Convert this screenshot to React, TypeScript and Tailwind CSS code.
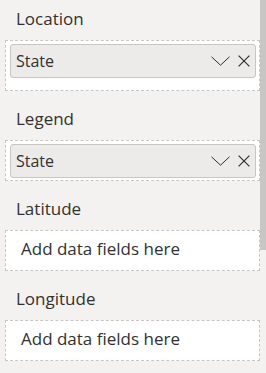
const font = { fontFamily: '"Open Sans", "Noto Sans", sans-serif' };

const Chevron = () => (
  <svg width="19" height="10" viewBox="0 0 19 10" fill="none" stroke="#323130" strokeWidth="1">
    <path d="M0.5 0.8 L9.5 9.2 L18.5 0.8" />
  </svg>
);

const Close = () => (
  <svg width="12" height="12" viewBox="0 0 12 12" fill="none" stroke="#323130" strokeWidth="1.2">
    <path d="M0.6 0.6 L11.4 11.4 M11.4 0.6 L0.6 11.4" />
  </svg>
);

const FieldChip = ({ name }: { name: string }) => (
  <div className="flex h-[34px] items-center rounded-[3px] border border-[#c8c6c4] bg-[#edebe9] pl-[5px] pr-[5px]">
    <span className="flex-1 text-[16px] leading-[24px] text-[#323130]">{name}</span>
    <Chevron />
    <span className="ml-[8px]">
      <Close />
    </span>
  </div>
);

const Well = ({ label, fields, extra }: { label: string; fields?: string[]; extra?: boolean }) => (
  <div className="flex flex-col">
    <div className="pl-[11px] text-[17px] leading-[24px] text-[#323130]">{label}</div>
    {fields ? (
      <div
        className={`mt-[9px] border border-dashed border-[#c8c6c4] bg-white pl-[4px] pr-[3px] pt-[3px] ${
          extra ? "h-[51px]" : "h-[41px]"
        }`}
      >
        {fields.map((f) => (
          <FieldChip key={f} name={f} />
        ))}
      </div>
    ) : (
      <div className="mt-[9px] h-[41px] border border-dashed border-[#c8c6c4] bg-white pl-[15px] pt-[6px] text-[17px] leading-[24px] text-[#323130]">
        Add data fields here
      </div>
    )}
  </div>
);

export default function App() {
  return (
    <div className="flex h-[373px] w-[266px] overflow-hidden bg-[#f3f2f1]" style={font}>
      <div className="flex w-[260px] flex-col gap-[16px] pl-[5px] pt-[7px]">
        <Well label="Location" fields={["State"]} extra />
        <Well label="Legend" fields={["State"]} />
        <Well label="Latitude" />
        <Well label="Longitude" />
      </div>
      <div className="w-[6px]">
        <div className="h-[250px] bg-[#c8c6c4]" />
      </div>
    </div>
  );
}
